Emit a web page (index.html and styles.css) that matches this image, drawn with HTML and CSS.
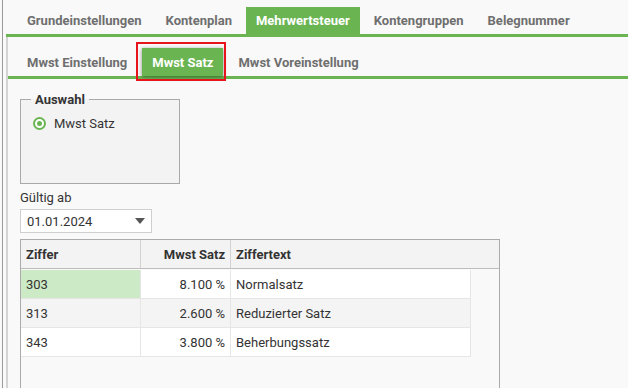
FILE: index.html
```html
<!DOCTYPE html>
<html lang="de">
<head>
  <meta charset="UTF-8">
  <meta name="viewport" content="width=device-width, initial-scale=1.0">
  <title>Mehrwertsteuer</title>
  <link rel="stylesheet" href="styles.css">
</head>
<body>

  <div class="frame">
    <ul class="tabs">
      <li>Grundeinstellungen</li>
      <li>Kontenplan</li>
      <li class="active">Mehrwertsteuer</li>
      <li>Kontengruppen</li>
      <li>Belegnummer</li>
    </ul>

    <div class="panel">
      <ul class="tabs sub">
        <li>Mwst Einstellung</li>
        <li class="active marked">Mwst Satz</li>
        <li>Mwst Voreinstellung</li>
      </ul>

      <div class="content">
        <fieldset class="group">
          <legend>Auswahl</legend>
          <label class="radio">
            <span class="dot"></span>
            Mwst Satz
          </label>
        </fieldset>

        <div class="field">
          <div class="field-label">Gültig ab</div>
          <div class="select">
            <span>01.01.2024</span>
            <span class="caret"></span>
          </div>
        </div>

        <div class="grid">
          <div class="grid-head">
            <div class="cell">Ziffer</div>
            <div class="cell num">Mwst Satz</div>
            <div class="cell">Ziffertext</div>
          </div>
          <div class="grid-body">
            <div class="row selected">
              <div class="cell">303</div>
              <div class="cell num">8.100 %</div>
              <div class="cell">Normalsatz</div>
            </div>
            <div class="row alt">
              <div class="cell">313</div>
              <div class="cell num">2.600 %</div>
              <div class="cell">Reduzierter Satz</div>
            </div>
            <div class="row">
              <div class="cell">343</div>
              <div class="cell num">3.800 %</div>
              <div class="cell">Beherbungssatz</div>
            </div>
          </div>
        </div>
      </div>
    </div>
  </div>

</body>
</html>
```

FILE: styles.css
```css
* {
  margin: 0;
  padding: 0;
  box-sizing: border-box;
}

ul, li {
  list-style: none;
}

html, body {
  height: 100%;
  overflow: hidden;
}

body {
  background-color: #f9f9f9;
  font-family: Roboto, "Liberation Sans", sans-serif;
  font-size: 13px;
  color: #333;
}

.frame {
  height: 100%;
  margin-left: 2px;
  padding-left: 3px;
  border-left: 1px solid #9a9a9a;
  display: flex;
  flex-direction: column;
}

/* tab bars */
.tabs {
  flex-shrink: 0;
  display: flex;
  align-items: flex-end;
  height: 37px;
  padding-left: 11px;
  border-bottom: 3px solid #6ab552;
}

.tabs > li {
  height: 27px;
  padding: 0 10px;
  margin-right: 4px;
  display: flex;
  align-items: center;
  font-weight: bold;
  color: #6f6f6f;
  cursor: pointer;
}

.tabs > li.active {
  background-color: #6ab552;
  color: #fff;
}

.panel {
  flex: 1;
  min-height: 0;
  overflow: hidden;
  border-left: 2px solid #d4d4d4;
}

.tabs.sub {
  height: 42px;
  padding-left: 9px;
}

.tabs.sub > li {
  margin-right: 5px;
}

.tabs.sub > li.active {
  position: relative;
  height: 28px;
  box-shadow: 0 1px 4px rgba(0, 0, 0, 0.45);
}

.tabs.sub > li.marked::after {
  content: "";
  position: absolute;
  left: -6px;
  right: -3px;
  top: -6px;
  bottom: -5px;
  border: 2px solid #e8141b;
}

.content {
  padding: 13px 0 0 12px;
}

/* Auswahl */
.group {
  width: 160px;
  height: 92px;
  border: 1px solid #a9a9a9;
  background-color: #f3f3f3;
  padding: 9px 12px 0;
}

.group legend {
  margin-left: -2px;
  padding: 0 4px;
  font-weight: bold;
  color: #333;
}

.radio {
  display: flex;
  align-items: center;
  gap: 8px;
}

.dot {
  width: 13px;
  height: 13px;
  border: 2px solid #6ab552;
  border-radius: 50%;
  background-color: #fff;
  display: flex;
  justify-content: center;
  align-items: center;
}

.dot::after {
  content: "";
  width: 5px;
  height: 5px;
  border-radius: 50%;
  background-color: #6ab552;
}

/* Gültig ab */
.field {
  margin-top: 6px;
}

.field-label {
  height: 19px;
  line-height: 16px;
}

.select {
  width: 132px;
  height: 24px;
  border: 1px solid #cfcfcf;
  background-color: #fff;
  display: flex;
  justify-content: space-between;
  align-items: center;
  padding: 0 6px 0 6px;
}

.caret {
  width: 0;
  height: 0;
  border-left: 5px solid transparent;
  border-right: 5px solid transparent;
  border-top: 6px solid #555;
}

/* Tabelle */
.grid {
  width: 480px;
  height: 200px;
  margin-top: 6px;
  border: 1px solid #ababab;
  background-color: #f9f9f9;
}

.grid-head {
  display: grid;
  grid-template-columns: 120px 90px 1fr;
  height: 29px;
  background-color: #f3f3f3;
  border-bottom: 1px solid #bdbdbd;
  font-weight: bold;
}

.grid-head .cell {
  border-right: 1px solid #d2d2d2;
}

.grid-head .cell:last-child {
  border-right: 0;
}

.cell {
  display: flex;
  align-items: center;
  padding: 0 5px;
}

.cell.num {
  justify-content: flex-end;
}

.grid-body {
  width: 450px;
  padding-top: 1px;
}

.row {
  display: grid;
  grid-template-columns: 120px 90px 1fr;
  height: 29px;
  background-color: #fff;
  border-bottom: 1px solid #e6e6e6;
  border-right: 1px solid #e6e6e6;
}

.row .cell {
  border-right: 1px solid #e6e6e6;
}

.row .cell:last-child {
  border-right: 0;
}

.row.alt {
  background-color: #f4f4f4;
}

.row.selected .cell:first-child {
  background-color: #cdeac6;
}
```
